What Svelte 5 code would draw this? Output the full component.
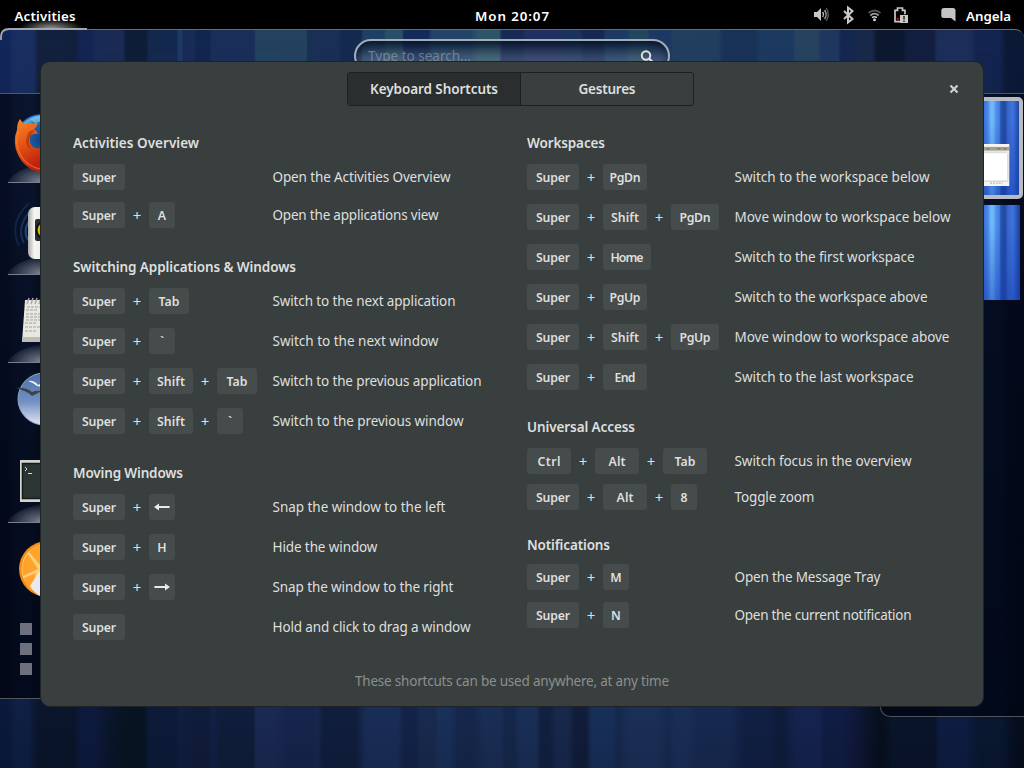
<script>
  // Adjusts tracking so a label occupies its designed width.
  function fit(node, width) {
    const range = document.createRange();
    range.selectNodeContents(node);
    const natural = range.getBoundingClientRect().width;
    const count = node.textContent.length;
    if (width && count > 1) {
      const gap = (width - natural) / (count - 1);
      node.style.letterSpacing = gap + 'px';
      node.style.marginRight = -gap + 'px';
    }
  }

  const sizes = { Super: [52, 34], A: [26, 0], Tab: [40, 21], Shift: [44, 28], '`': [26, 0], '←': [26, 0], '→': [26, 0], H: [26, 0], PgDn: [44, 31], PgUp: [44, 31], Home: [48, 33], End: [44, 21], Ctrl: [44, 23], Alt: [44, 17], '8': [26, 0], M: [26, 0], N: [26, 0] };

  const left = [
    { title: 'Activities Overview', w: 126, gap: 12, top: 0, head: 11, rows: [
      { keys: ['Super'], text: 'Open the Activities Overview', w: 178 },
      { keys: ['Super', 'A'], text: 'Open the applications view', w: 166 }] },
    { title: 'Switching Applications & Windows', w: 223, gap: 14, top: 29, head: 11, rows: [
      { keys: ['Super', 'Tab'], text: 'Switch to the next application', w: 183 },
      { keys: ['Super', '`'], text: 'Switch to the next window', w: 166 },
      { keys: ['Super', 'Shift', 'Tab'], text: 'Switch to the previous application', w: 209 },
      { keys: ['Super', 'Shift', '`'], text: 'Switch to the previous window', w: 191 }] },
    { title: 'Moving Windows', w: 110, gap: 14, top: 29, head: 11, rows: [
      { keys: ['Super', '←'], text: 'Snap the window to the left', w: 173 },
      { keys: ['Super', 'H'], text: 'Hide the window', w: 105 },
      { keys: ['Super', '→'], text: 'Snap the window to the right', w: 181 },
      { keys: ['Super'], text: 'Hold and click to drag a window', w: 198 }] }
  ];
  const right = [
    { title: 'Workspaces', w: 78, gap: 14, top: 0, head: 11, rows: [
      { keys: ['Super', 'PgDn'], text: 'Switch to the workspace below', w: 195 },
      { keys: ['Super', 'Shift', 'PgDn'], wide: 48, text: 'Move window to workspace below', w: 216 },
      { keys: ['Super', 'Home'], text: 'Switch to the first workspace', w: 180 },
      { keys: ['Super', 'PgUp'], text: 'Switch to the workspace above', w: 193 },
      { keys: ['Super', 'Shift', 'PgUp'], wide: 48, text: 'Move window to workspace above', w: 215 },
      { keys: ['Super', 'End'], text: 'Switch to the last workspace', w: 179 }] },
    { title: 'Universal Access', w: 108, gap: 10, top: 27, head: 11, rows: [
      { keys: ['Ctrl', 'Alt', 'Tab'], wide: 44, text: 'Switch focus in the overview', w: 177 },
      { keys: ['Super', 'Alt', '8'], text: 'Toggle zoom', w: 80 }] },
    { title: 'Notifications', w: 83, gap: 12, top: 25, head: 9, rows: [
      { keys: ['Super', 'M'], text: 'Open the Message Tray', w: 146 },
      { keys: ['Super', 'N'], text: 'Open the current notification', w: 177 }] }
  ];
</script>

{#snippet column(groups)}
  {#each groups as g}
    <section style="margin-top:{g.top}px">
      <h2 style="margin-bottom:{g.head}px"><span use:fit={g.w}>{g.title}</span></h2>
      <div class="rows" style="gap:{g.gap}px">
        {#each g.rows as row}
          <div class="row">
            <div class="keys">
              {#each row.keys as k, i}
                {#if i > 0}<span class="plus">+</span>{/if}
                <kbd style="width:{i === 2 && row.wide ? row.wide : sizes[k][0]}px">
                  {#if k === '←' || k === '→'}
                    <svg class:flip={k === '→'} width="16" height="10" viewBox="0 0 16 10" aria-label={k}><path d="M0 5 L5 1.4 V4 H15.6 V6 H5 V8.6Z" fill="#e8e9e8" /></svg>
                  {:else}<span use:fit={sizes[k][1]}>{k}</span>{/if}
                </kbd>
              {/each}
            </div>
            <div class="desc"><span use:fit={row.w}>{row.text}</span></div>
          </div>
        {/each}
      </div>
    </section>
  {/each}
{/snippet}

<div class="desktop">
  <div class="wall"></div>
  <div class="wall low"></div>
  <div class="edge"></div>

  <header>
    <div class="act"><span use:fit={61}>Activities</span></div>
    <div class="clock"><span use:fit={74}>Mon 20:07</span></div>
    <div class="status">
      <svg width="204" height="30" viewBox="812 0 204 30" fill="none">
        <path d="M814 12h3l4-4v13l-4-4h-3z" fill="#c8c8c8" />
        <path d="M822.7 12q1.6 2.5 0 5" stroke="#c8c8c8" stroke-width="1.4" />
        <path d="M824.6 10q3 4.500 0 9" stroke="#a5a5a5" stroke-width="1.4" />
        <path d="M826.3 8q4 6.500 0 13" stroke="#555" stroke-width="1.4" />
        <path d="M844 11l8.500 8-4.500 3.500V7.500L852.500 11l-8.500 8" stroke="#c8c8c8" stroke-width="2" />
        <path d="M868.500 13q6-5 12 0" stroke="#555" stroke-width="1.700" />
        <path d="M870.300 15.500q4.200-3.600 8.400 0" stroke="#999" stroke-width="1.700" />
        <path d="M872 17.700q2.500-2 5 0" stroke="#ccc" stroke-width="1.500" />
        <circle cx="874.500" cy="19.700" r="1.500" fill="#ccc" />
        <path d="M900 21.700H895V10.300h2.500V8h5v2.300h2.500v4" stroke="#c8c8c8" stroke-width="1.700" />
        <rect x="896.700" y="18" width="2.300" height="2" fill="#c00000" />
        <rect x="900" y="15" width="8" height="8" fill="#c8c8c8" />
        <path d="M904 16v3.500m0 1v1.500" stroke="#222" stroke-width="1.500" />
        <path d="M944 8h9q2.500 0 2.500 2.500v11L951 18h-7q-2.700 0-2.700-2.500v-5Q941.300 8 944 8z" fill="#c3c3c3" />
      </svg>
      <span class="user"><span use:fit={45}>Angela</span></span>
    </div>
    <svg class="hot" width="88" height="14" viewBox="0 0 88 14"><path d="M1 12V9Q1 1 9 1H87" fill="none" stroke="#a4a6ae" stroke-width="1.800" /></svg>
  </header>

  <div class="search">
    <span use:fit={103}>Type to search...</span>
    <svg width="14" height="14" viewBox="0 0 14 14"><circle cx="6" cy="5.500" r="4.200" fill="none" stroke="#e2e2e2" stroke-width="2" /><path d="M9 8.500l4 4" stroke="#e2e2e2" stroke-width="2.400" /></svg>
  </div>

  <div class="dash">
    <svg width="42" height="604" viewBox="0 94 42 604">
      <defs>
        <radialGradient id="glow" cx="1" cy="1" r="1"><stop offset="0" stop-color="#a4a8b4" stop-opacity=".8" /><stop offset=".6" stop-color="#7b8090" stop-opacity=".45" /><stop offset="1" stop-color="#687084" stop-opacity=".08" /></radialGradient>
        <radialGradient id="globe"><stop offset="0" stop-color="#103e80" /><stop offset=".65" stop-color="#1c6bb5" /><stop offset=".9" stop-color="#65b3e6" /><stop offset="1" stop-color="#164a93" /></radialGradient>
        <linearGradient id="fox" x2=".3" y2="1"><stop stop-color="#f58a28" /><stop offset=".45" stop-color="#e85c16" /><stop offset="1" stop-color="#bf210c" /></linearGradient>
        <linearGradient id="sky" x2="0" y2="1"><stop stop-color="#4c70a8" /><stop offset=".55" stop-color="#7290c3" /><stop offset="1" stop-color="#e0e6f2" /></linearGradient>
        <linearGradient id="speaker"><stop stop-color="#a8aaa7" /><stop offset=".25" stop-color="#f6f6f3" /><stop offset="1" stop-color="#dedfdc" /></linearGradient>
      </defs>
      {#each [182, 274, 362, 522] as y}
        <path d="M7 {y}Q17 {y - 14} 42 {y - 18}V{y}z" fill="url(#glow)" />
        <path d="M8 {y}.500H42" stroke="#777e8d" stroke-width="1" />
      {/each}
      <circle cx="41" cy="140" r="26" fill="url(#globe)" />
      <path d="M30 119q5-3 11-4v6l-6 2z" fill="#77c4ee" opacity=".65" />
      <path d="M20 119q2 3 4 5 6-2 9 0 3-2 5-1-1 4-4 6 3 2 4 5-6-1-8 3-1 6 3 10 4 2 9 1v24Q26 171 18 155 12 142 17 130q0-7 3-11z" fill="url(#fox)" />
      <path d="M19 131q-4 9-1 18 5 16 22 20" fill="none" stroke="#ff9d3a" stroke-width="1.200" opacity=".5" />
      <path d="M28 133q2-3 7-3-3 4-6 9-1 7 3 11-6-4-6-10z" fill="#a52c10" opacity=".6" />
      <g fill="none" stroke="#23528a" stroke-width="2"><path d="M29 203q-21 20-10 43" opacity=".3" /><path d="M30 211q-14 17-6 32" opacity=".5" /><path d="M31 218q-9 12-3 22" opacity=".8" /></g>
      <rect x="28" y="207" width="25" height="52" rx="7" fill="url(#speaker)" />
      <rect x="35" y="219" width="20" height="22" rx="2" fill="#292f34" /><circle cx="45" cy="230" r="8.500" fill="#d5b600" stroke="#111" stroke-width="2" />
      <path d="M25 300H42v42H22z" fill="#e8e7e2" /><path d="M22 337h20v5H22z" fill="#bcbcb9" />
      <path d="M27 304l2-6m2 6l2-6m2 6l2-6m2 6l2-6" stroke="#aaa" stroke-width="1.500" />
      <path d="M27 307h14M26 310h11M26 314h15M26 317h14M26 320h15M25 323h12M25 327h16M25 331h11" stroke="#a3a39f" stroke-width="1" stroke-dasharray="3 1" />
      <circle cx="44" cy="399" r="26" fill="url(#sky)" stroke="#8fa5cb" />
      <path d="M28 381q6-1 10 4l4-2v4l-5-1q-3-3-9-5z" fill="#eef1f6" /><path d="M16 388q10-1 16 4 4-2 10-1l-10 5q-5-5-16-8z" fill="#3b444a" />
      <path d="M20 460h22v42H20z" fill="#d4d3ce" /><path d="M22.500 463.500H42v35H22.500z" fill="#2b3533" stroke="#161c1c" stroke-width="1.500" />
      <path d="M25 467l2 2-2 2m3 2.500h4" fill="none" stroke="#ddd" stroke-width="1" />
      <circle cx="47" cy="569" r="28" fill="#f38b13" /><circle cx="47" cy="569" r="25.500" fill="#ffcf7c" />
      <path d="M41 566L29 552q5-7 13-8zM38 569L23 576q-3-14 5-22 4 6 10 15zM36 573L24 578q2 8 7 13z" fill="#ffa32a" />
      <path d="M42 568L30 586q5 8 12 11z" fill="#e8e9f0" />
      <path d="M20 623h12v12H20zM20 643h12v12H20zM20 663h12v12H20z" fill="#81848e" opacity=".85" />
    </svg>
  </div>

  <div class="spaces">
    <div class="space active">
      <svg width="30" height="44" viewBox="0 0 30 44"><path d="M0 0h30v44H0z" fill="#f5f5f3" /><path d="M0 3h30v4H0z" fill="#9ba694" /><path d="M0 10h28v28H0z" fill="#fff" /><path d="M0 8.500h28M0 39h29M28.500 10v28" stroke="#ccc" /><path d="M6 5h3m8 0h4m3 0h3" stroke="#a14f48" /><path d="M10 41h13" stroke="#aaa" stroke-dasharray="2 1" /></svg>
    </div>
    <div class="space"></div>
  </div>

  <main>
    <div class="top">
      <div class="tabs">
        <button class="on"><span use:fit={128}>Keyboard Shortcuts</span></button>
        <button><span use:fit={57}>Gestures</span></button>
      </div>
      <svg class="close" width="10" height="10" viewBox="0 0 10 10"><path d="M1.500 1.500l7 7m0-7l-7 7" stroke="#ced0cf" stroke-width="2.200" /></svg>
    </div>
    <div class="cols">
      <div class="col one">{@render column(left)}</div>
      <div class="col two">{@render column(right)}</div>
    </div>
    <footer><span use:fit={314}>These shortcuts can be used anywhere, at any time</span></footer>
  </main>
</div>

<style>
  :global(body) { margin: 0; background: #000; }
  .desktop { position: relative; width: 1024px; height: 768px; overflow: hidden; background: #000; font: 13.5px/20px "Noto Sans", "Open Sans", sans-serif; color: #dedfde; }
  .desktop span { white-space: nowrap; }
  .wall { position: absolute; inset: 29px 0 0; background: linear-gradient(90deg, #13265b 0 9px, #1a2f60 13px 34px, #13213f 38px 62px, #12203c 75px, #142553 80px 92px, #1a2b55 96px 123px, #0f1e38 126px 146px, #15294f 149px 177px, #1d3a65 178px 182px, #182c58 183px 194px, #132650 196px 209px, #1a2f5a 212px 254px, #24435f 256px 306px, #1a3055 308px 338px, #152a50 342px 361px, #1f4065 363px 384px, #2a4f68 386px 402px, #142a5a 404px 428px, #244468 432px 470px, #2e5568 478px 499px, #182a55 502px 523px, #222f61 526px 560px, #1b345f 564px 580px, #152951 584px 603px, #1d3b65 606px 627px, #24475f 630px 647px, #1e3864 650px 670px, #223f60 673px 718px, #193357 723px 755px, #1d3a60 760px 793px, #27435f 795px 818px, #203860 821px 838px, #152850 841px 853px, #19294b 858px 872px, #0c1930 877px 903px, #141f40 907px 934px, #1c2f5a 937px 970px, #132550 976px 999px, #0c1a38 1006px); }
  .low { background: linear-gradient(#0000, #0000 670px, #00040f22), linear-gradient(90deg, #0a1a3c 0 8px, #0e2045 16px 28px, #0a162c 38px 74px, #0d1b40 82px 94px, #0a162c 110px, #071422 126px 144px, #0d1b3a 149px 176px, #111f42 180px, #101d3b 192px 208px, #13214a 213px, #101e3c 219px 253px, #1a2a54 256px 275px, #17254e 290px 313px, #172951 318px, #101f3e 323px 356px, #192e58 366px 398px, #13244a 404px 416px, #182b50 420px 435px, #1a315a 438px 450px, #15284d 458px 474px, #1a2f56 484px 500px, #15284c 506px 514px, #1a3058 520px 536px, #122142 541px 550px, #18294e 556px 568px, #111e3b 575px 586px, #18305a 592px 613px, #15294e 618px, #1b3059 629px 658px, #162a50 668px, #1a2f58 675px 688px, #172a52 696px 730px, #112044 745px 770px, #101c3c 777px 783px, #152450 796px 819px, #111d45 824px 842px, #10193b 855px, #07101f 878px 884px, #0a152b 892px 935px, #0e1d43 939px 966px, #091831 979px 1001px, #060e1e 1016px); -webkit-mask-image: linear-gradient(transparent, #000 85%); mask-image: linear-gradient(transparent, #000 85%); }
  .edge { position: absolute; inset: 29px 0 auto; height: 60px; border-top: 1px solid #666b80; border-radius: 9px 9px 0 0; box-shadow: 0 0 0 10px #000; clip-path: inset(0 0 30px 0); }
  header { position: absolute; inset: 0 0 auto; height: 29px; background: #000; display: grid; grid-template-columns: 410px 204px 1fr; line-height: 32px; color: #fff; font-weight: 600; font-size: 13.3px; }
  .hot { position: absolute; left: 0; top: 28px; }
  .act { position: relative; padding-left: 14.5px; }
  .act::before { content: ""; position: absolute; left: 18px; top: 19px; width: 66px; height: 10px; background: radial-gradient(ellipse at 50% 100%, #9c9c9c, transparent 70%); }
  .act span { position: relative; }
  .clock { text-align: center; }
  .status { position: relative; padding-left: 198px; }
  .status svg { display: block; }
  .user { position: absolute; left: 352px; top: 0; }
  .search { position: absolute; left: 354px; top: 39px; width: 312px; height: 30px; border: 2px solid #a3adb9; border-radius: 17px; box-sizing: content-box; background: linear-gradient(#071429aa, #8292a044 55%, #a4b4b555); display: flex; align-items: center; justify-content: space-between; padding: 0; color: #9ba4ad99; box-shadow: inset 0 2px 8px #051225aa; }
  .search > span { margin-left: 12px; line-height: 32px; }
  .search svg { margin: 2px 14px 0 0; }
  .dash { position: absolute; left: 0; top: 93px; width: 42px; height: 604px; border: solid #53565b; border-width: 1px 0; background: linear-gradient(90deg, #00030c99, #00051077), linear-gradient(#01071433, #01041488); }
  .dash svg { display: block; }
  .spaces { position: absolute; left: 880px; top: 93px; width: 143px; height: 622px; box-sizing: content-box; border: 1px solid #50545a; border-right: 0; border-radius: 10px 0 0 10px; background: linear-gradient(#000412a0, #000412bb); }
  .space { position: absolute; left: 8px; top: 111px; width: 131px; height: 95px; background: linear-gradient(0deg, #1238ae77, transparent 80%), linear-gradient(90deg, #3a72dc 0 95px, #4d8ae8 99px, #70bafa 102px 104px, #4a86e8 108px 110px, #2554ab 112px, #2049a0 116px, #3a68cc 119px, #3f72dc 124px, #2c5cc4 127px, #1d418c 131px); }
  .active { left: 6px; top: 3px; width: 128px; height: 94px; border: 4px solid #b8bbc2; border-radius: 5px; background-position: -2px 0; background-size: 131px 100%; }
  .active svg { position: absolute; left: 89px; top: 43px; width: 30px; height: 42px; }
  main { position: absolute; left: 40px; top: 61px; width: 944px; height: 646px; box-sizing: border-box; border: 1px solid #202323; border-radius: 10px; background: #393f3e; display: flex; flex-direction: column; }
  .top { display: flex; padding: 10px 24px 0 306px; justify-content: space-between; align-items: center; height: 34px; }
  .tabs { display: flex; width: 345px; height: 32px; border: 1px solid #1d2020; border-radius: 3px; }
  button { all: unset; box-sizing: border-box; flex: 1; text-align: center; line-height: 33px; font-weight: 600; font-size: 13.5px; }
  .on { border-right: 1px solid #1d2020; background: #2b2e2e; }
  .cols { display: flex; padding: 27px 0 0 32px; height: 525px; }
  .one { width: 454px; }
  .two { flex: 1; }
  h2 { margin: 0; font-size: 13.5px; line-height: 20px; font-weight: 600; }
  .rows { display: flex; flex-direction: column; }
  .row { display: flex; height: 26px; line-height: 27px; }
  .keys { display: flex; width: 199.5px; }
  .two .keys { width: 207.5px; }
  kbd { display: flex; align-items: center; justify-content: center; height: 26px; background: #454c4b; border-radius: 3px; font: 600 12.3px/27px "Noto Sans", sans-serif; flex: none; }
  .plus { width: 24px; text-align: center; font-size: 15px; line-height: 26px; }
  .desc { flex: 1; }
  .flip { transform: scaleX(-1); }
  footer { text-align: center; color: #8c8f8e; line-height: 20px; padding-top: 13px; }
</style>
